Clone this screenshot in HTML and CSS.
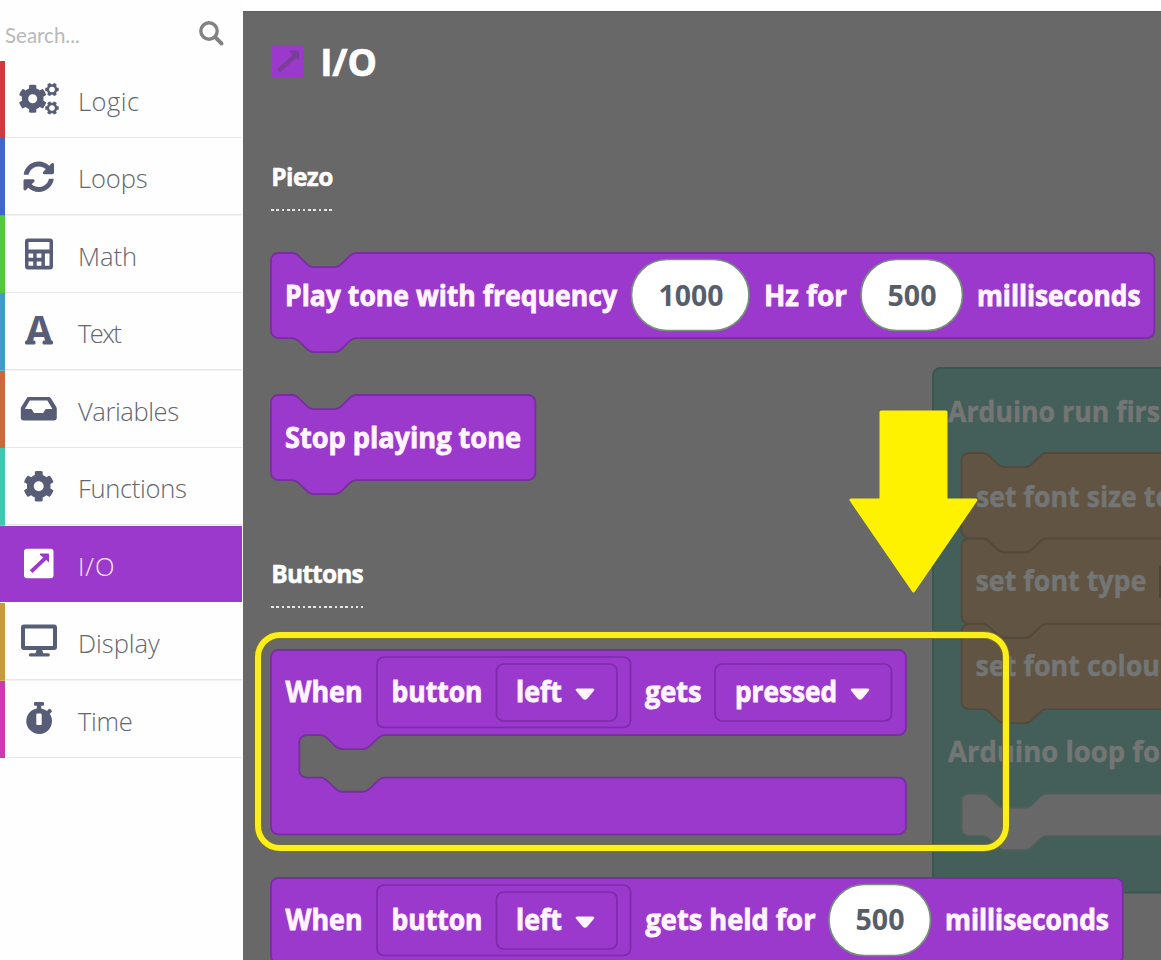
FILE: index.html
```html
<!DOCTYPE html>
<html lang="en">
<head>
<meta charset="utf-8">
<title>Block editor</title>
<link rel="stylesheet" href="styles.css">
</head>
<body>
<svg class="defs" aria-hidden="true">
  <defs>
    <path id="cog" d="M487.4 315.7l-42.6-24.6c4.3-23.2 4.3-47 0-70.2l42.6-24.6c4.9-2.8 7.1-8.6 5.5-14-11.1-35.6-30-67.8-54.7-94.6-3.8-4.1-10-5.1-14.8-2.3L380.8 110c-17.9-15.4-38.5-27.3-60.8-35.1V25.8c0-5.6-3.9-10.5-9.4-11.7-36.7-8.2-74.3-7.8-109.2 0-5.5 1.2-9.4 6.1-9.4 11.7V75c-22.2 7.9-42.8 19.8-60.8 35.1L88.7 85.5c-4.9-2.8-11-1.9-14.8 2.3-24.7 26.7-43.6 58.9-54.7 94.6-1.7 5.4.6 11.2 5.5 14L67.3 221c-4.3 23.2-4.3 47 0 70.2l-42.6 24.6c-4.9 2.8-7.1 8.6-5.5 14 11.1 35.6 30 67.8 54.7 94.6 3.8 4.1 10 5.1 14.8 2.3l42.6-24.6c17.9 15.4 38.5 27.3 60.8 35.1v49.2c0 5.6 3.9 10.5 9.4 11.7 36.7 8.2 74.3 7.8 109.2 0 5.5-1.2 9.4-6.1 9.4-11.7v-49.2c22.2-7.9 42.8-19.8 60.8-35.1l42.6 24.6c4.9 2.8 11 1.9 14.8-2.3 24.7-26.7 43.6-58.9 54.7-94.6 1.5-5.5-.7-11.3-5.6-14.1zM256 336c-44.1 0-80-35.9-80-80s35.9-80 80-80 80 35.9 80 80-35.9 80-80 80z"/>
    <path id="caret" d="M2 0h15q3 0 1.200 2.600l-6.500 7.600q-2.200 2.200-4.400 0L.8 2.600Q-1 0 2 0z"/>
    <path id="set-block" d="M0 4a4 4 0 0 1 4-4h8c2 0 3 1 4 2l4 4c1 1 2 2 4 2h12c2 0 3-1 4-2l4-4c1-1 2-2 4-2H160V48H48c-2 0-3 1-4 2l-4 4c-1 1-2 2-4 2h-12c-2 0-3-1-4-2l-4-4c-1-1-2-2-4-2H4a4 4 0 0 1-4-4z"/>
  </defs>
</svg>
<div class="app">
  <aside class="toolbox">
    <div class="search">
      <span class="search-text">Search...</span>
      <svg class="search-icon" width="26" height="26" viewBox="0 0 26 26"><circle cx="10" cy="10" r="8.200" fill="none" stroke="#828282" stroke-width="3.400"/><path d="M16.200 16.200l6.300 6.300" stroke="#828282" stroke-width="4" stroke-linecap="round"/></svg>
    </div>
    <nav class="categories">
      <div class="category logic">
        <svg class="icon" width="44" height="36" viewBox="0 0 44 36"><use href="#cog" transform="translate(2.200 3.200) scale(.0566)"/><g transform="translate(36 8.500)"><use href="#cog" transform="rotate(30) scale(.0275) translate(-256 -256)"/><circle r="2.800" fill="#fff"/></g><g transform="translate(36 27)"><use href="#cog" transform="rotate(30) scale(.0275) translate(-256 -256)"/><circle r="2.800" fill="#fff"/></g></svg>
        <span class="label">Logic</span>
      </div>
      <div class="category loops">
        <svg class="icon" width="44" height="36" viewBox="0 0 44 36"><path transform="translate(7 3) scale(.0615)" d="M370.720 133.280C339.458 104.008 298.888 87.962 255.848 88c-77.458.068-144.328 53.178-162.791 126.850-1.344 5.363-6.122 9.150-11.651 9.150H24.103c-7.498 0-13.194-6.807-11.807-14.176C33.933 94.924 134.813 8 256 8c66.448 0 126.791 26.136 171.315 68.685L463.030 40.970C478.149 25.851 504 36.559 504 57.941V192c0 13.255-10.745 24-24 24H345.941c-21.382 0-32.090-25.851-16.971-40.971l41.750-41.749zM32 296h134.059c21.382 0 32.090 25.851 16.971 40.971l-41.750 41.750c31.262 29.273 71.835 45.319 114.876 45.280 77.418-.070 144.315-53.144 162.787-126.849 1.344-5.363 6.122-9.150 11.651-9.150h57.304c7.498 0 13.194 6.807 11.807 14.176C478.067 417.076 377.187 504 256 504c-66.448 0-126.791-26.136-171.315-68.685L48.970 471.030C33.851 486.149 8 475.441 8 454.059V320c0-13.255 10.745-24 24-24z"/></svg>
        <span class="label">Loops</span>
      </div>
      <div class="category math">
        <svg class="icon" width="44" height="36" viewBox="0 0 44 36"><path fill-rule="evenodd" d="M12 2.500h22a3 3 0 0 1 3 3v25a3 3 0 0 1-3 3H12a3 3 0 0 1-3-3V5.500a3 3 0 0 1 3-3zM12.500 6v7.500h21V6zM12.500 17.500v4.300h4.700V17.500zm8.200 0v4.300h4.700V17.500zM12.500 25.500v4.300h4.700V25.500zm8.200 0v4.300h4.700V25.500zM28.900 17.500v12.300h4.600V17.500z"/></svg>
        <span class="label">Math</span>
      </div>
      <div class="category text">
        <svg class="icon" width="44" height="36" viewBox="0 0 44 36"><text class="glyph" x="9.500" y="31" textLength="27" lengthAdjust="spacingAndGlyphs">A</text><rect x="9" y="27.500" width="10.500" height="4" rx="1.500"/><rect x="26.500" y="27.500" width="10.500" height="4" rx="1.500"/></svg>
        <span class="label">Text</span>
      </div>
      <div class="category variables">
        <svg class="icon" width="44" height="36" viewBox="0 0 44 36"><path fill-rule="evenodd" d="M12.500 6h20q1.500 0 2.400 1.300l5 7.900q.9 1.300.9 2.800v8.500q0 3-3 3H7.800q-3 0-3-3V18q0-1.500.9-2.800l5-7.900Q11 6 12.500 6zM13.800 9.500l-5 8.500h6.700l2.500 4h9.200l2.500-4h6.700l-5-8.500z"/></svg>
        <span class="label">Variables</span>
      </div>
      <div class="category functions">
        <svg class="icon" width="44" height="36" viewBox="0 0 44 36"><use href="#cog" transform="translate(7 2.500) scale(.0615)"/></svg>
        <span class="label">Functions</span>
      </div>
      <div class="category io selected">
        <svg class="icon" width="44" height="36" viewBox="0 0 44 36"><rect x="8" y="2.800" width="29.500" height="29.500" rx="3"/><path class="hole" d="M24 7.500h8q1 0 1 1v8l-2.800-2.500L16.500 27l-2.700-2.700L27.300 11.500 24 9z"/></svg>
        <span class="label">I/O</span>
      </div>
      <div class="category display">
        <svg class="icon" width="44" height="36" viewBox="0 0 44 36"><path fill-rule="evenodd" d="M8 1.500h30a3 3 0 0 1 3 3v19.500a3 3 0 0 1-3 3H26.200l1 3.300h5q1.600 0 1.600 1.600t-1.600 1.600H14.500q-1.600 0-1.600-1.600t1.600-1.600h5l1-3.300H8a3 3 0 0 1-3-3V4.500a3 3 0 0 1 3-3zM9 5.500v17.500h28V5.500z"/></svg>
        <span class="label">Display</span>
      </div>
      <div class="category time">
        <svg class="icon" width="44" height="36" viewBox="0 0 44 36"><path fill-rule="evenodd" d="M19 1h8q1 0 1 1V3.800q0 1-1 1h-1.800v2.600q3.200.6 5.800 2.500l1.800-1.800q.8-.6 1.500 0l1.300 1.300q.7.700 0 1.500l-1.800 1.900a12.900 12.900 0 1 1-13-5.400V4.800H19q-1 0-1-1V2q0-1 1-1zM21.300 12.500q-1 0-1 1v9.500q0 1 1 1h3.400q1 0 1-1V13.500q0-1-1-1z"/></svg>
        <span class="label">Time</span>
      </div>
    </nav>
  </aside>
  <main class="editor">
    <svg class="workspace" width="229" height="528" viewBox="0 0 229 528">
      <g transform="translate(1 1)">
        <path class="teal" transform="scale(1.772)" d="M0 4a4 4 0 0 1 4-4H160V296H4a4 4 0 0 1-4-4z"/>
        <path class="gap" transform="translate(28.500 425.500) scale(1.772)" d="M4 0h8c2 0 3 1 4 2l4 4c1 1 2 2 4 2h12c2 0 3-1 4-2l4-4c1-1 2-2 4-2H160V24H48c-2 0-3 1-4 2l-4 4c-1 1-2 2-4 2h-12c-2 0-3-1-4-2l-4-4c-1-1-2-2-4-2H4a4 4 0 0 1-4-4V4a4 4 0 0 1 4-4z"/>
        <use class="brown" href="#set-block" transform="translate(28.500 256) scale(1.772)"/>
        <use class="brown" href="#set-block" transform="translate(28.500 170.500) scale(1.772)"/>
        <use class="brown" href="#set-block" transform="translate(28.500 85) scale(1.772)"/>
        <path d="M227 198v32" stroke="#3c3a30" stroke-width="1"/>
        <text x="15" y="53.500" textLength="212" lengthAdjust="spacingAndGlyphs">Arduino run firs</text>
        <text x="43" y="138.500" textLength="196" lengthAdjust="spacingAndGlyphs">set font size to</text>
        <text x="42.500" y="223" textLength="171" lengthAdjust="spacingAndGlyphs">set font type</text>
        <text x="42.500" y="308" textLength="184.500" lengthAdjust="spacingAndGlyphs">set font colou</text>
        <text x="15" y="393.500" textLength="212" lengthAdjust="spacingAndGlyphs">Arduino loop fo</text>
      </g>
    </svg>
    <section class="flyout">
      <header class="flyout-header">
        <svg class="header-icon" width="33" height="33" viewBox="0 0 33 33"><rect width="33" height="33" rx="3" fill="#9a39cb"/><path fill="#793f98" d="M18 5.500h8.500q1.500 0 1.500 1.500v8.500l-3-2.500L9 27.500 6 24.500 21.500 10z"/></svg>
        <h1 class="title">I/O</h1>
      </header>
      <h2 class="group piezo">Piezo</h2>
      <svg class="block play" width="890" height="102" viewBox="-1 -1 890 102">
        <path class="purple" transform="scale(1.772)" d="M0 4a4 4 0 0 1 4-4h8c2 0 3 1 4 2l4 4c1 1 2 2 4 2h12c2 0 3-1 4-2l4-4c1-1 2-2 4-2H494.500a4 4 0 0 1 4 4v40a4 4 0 0 1-4 4H48c-2 0-3 1-4 2l-4 4c-1 1-2 2-4 2h-12c-2 0-3-1-4-2l-4-4c-1-1-2-2-4-2H4a4 4 0 0 1-4-4z"/>
        <text x="14" y="52.500" textLength="332" lengthAdjust="spacingAndGlyphs">Play tone with frequency</text>
        <rect class="field" x="360.500" y="6.500" width="117.500" height="71" rx="35.500"/>
        <text class="value" x="387.500" y="52.500" textLength="65" lengthAdjust="spacingAndGlyphs">1000</text>
        <text x="493" y="52.500" textLength="83" lengthAdjust="spacingAndGlyphs">Hz for</text>
        <rect class="field" x="590" y="6.500" width="101.500" height="71" rx="35.500"/>
        <text class="value" x="616.500" y="52.500" textLength="49" lengthAdjust="spacingAndGlyphs">500</text>
        <text x="706" y="52.500" textLength="163.500" lengthAdjust="spacingAndGlyphs">milliseconds</text>
      </svg>
      <svg class="block stop" width="270" height="102" viewBox="-1 -1 270 102">
        <path class="purple" transform="scale(1.772)" d="M0 4a4 4 0 0 1 4-4h8c2 0 3 1 4 2l4 4c1 1 2 2 4 2h12c2 0 3-1 4-2l4-4c1-1 2-2 4-2H145.200a4 4 0 0 1 4 4v40a4 4 0 0 1-4 4H48c-2 0-3 1-4 2l-4 4c-1 1-2 2-4 2h-12c-2 0-3-1-4-2l-4-4c-1-1-2-2-4-2H4a4 4 0 0 1-4-4z"/>
        <text x="14" y="52.500" textLength="236" lengthAdjust="spacingAndGlyphs">Stop playing tone</text>
      </svg>
      <h2 class="group buttons">Buttons</h2>
      <svg class="block when" width="640" height="187" viewBox="-1 -1 640 187">
        <path class="purple" transform="scale(1.772)" d="M0 4a4 4 0 0 1 4-4H354.300a4 4 0 0 1 4 4v40a4 4 0 0 1-4 4H64c-2 0-3 1-4 2l-4 4c-1 1-2 2-4 2h-12c-2 0-3-1-4-2l-4-4c-1-1-2-2-4-2h-8a4 4 0 0 0-4 4v16a4 4 0 0 0 4 4h8c2 0 3 1 4 2l4 4c1 1 2 2 4 2h12c2 0 3-1 4-2l4-4c1-1 2-2 4-2H354.300a4 4 0 0 1 4 4v24a4 4 0 0 1-4 4H4a4 4 0 0 1-4-4z"/>
        <text x="14.500" y="52" textLength="77" lengthAdjust="spacingAndGlyphs">When</text>
        <rect class="slot" x="106" y="7" width="253.500" height="70.500" rx="7"/>
        <text x="120.500" y="52" textLength="91" lengthAdjust="spacingAndGlyphs">button</text>
        <rect class="slot" x="225.500" y="14" width="120.500" height="57" rx="7"/>
        <text x="245" y="52" textLength="46" lengthAdjust="spacingAndGlyphs">left</text>
        <use class="caret" href="#caret" x="304.500" y="38.500"/>
        <text x="374" y="52" textLength="56.500" lengthAdjust="spacingAndGlyphs">gets</text>
        <rect class="slot" x="444" y="14" width="176.500" height="57" rx="7"/>
        <text x="464" y="52" textLength="102" lengthAdjust="spacingAndGlyphs">pressed</text>
        <use class="caret" href="#caret" x="579.500" y="38.500"/>
      </svg>
      <svg class="block held" width="856" height="84" viewBox="-1 -1 856 84">
        <path class="purple" transform="scale(1.772)" d="M0 4a4 4 0 0 1 4-4H476.700a4 4 0 0 1 4 4v40a4 4 0 0 1-4 4H4a4 4 0 0 1-4-4z"/>
        <text x="14.500" y="52" textLength="77" lengthAdjust="spacingAndGlyphs">When</text>
        <rect class="slot" x="106" y="7" width="253.500" height="70.500" rx="7"/>
        <text x="120.500" y="52" textLength="91" lengthAdjust="spacingAndGlyphs">button</text>
        <rect class="slot" x="225.500" y="14" width="120.500" height="57" rx="7"/>
        <text x="245" y="52" textLength="46" lengthAdjust="spacingAndGlyphs">left</text>
        <use class="caret" href="#caret" x="304.500" y="38.500"/>
        <text x="374.500" y="52" textLength="170" lengthAdjust="spacingAndGlyphs">gets held for</text>
        <rect class="field" x="558" y="6.500" width="101.500" height="71" rx="35.500"/>
        <text class="value" x="584.500" y="52" textLength="49" lengthAdjust="spacingAndGlyphs">500</text>
        <text x="674" y="52" textLength="164" lengthAdjust="spacingAndGlyphs">milliseconds</text>
      </svg>
    </section>
    <div class="highlight"></div>
    <svg class="arrow" width="133" height="186" viewBox="0 0 133 186"><path d="M33 2h65v88h30L65.500 181 3 90h30z"/></svg>
  </main>
</div>
</body>
</html>
```
FILE: styles.css
```css
* { box-sizing: border-box; }

body {
  margin: 0;
  background: #fff;
  font-family: "Open Sans", "Noto Sans", sans-serif;
}

.defs { position: absolute; width: 0; height: 0; }

.app {
  display: flex;
  width: 1161px;
  height: 960px;
  overflow: hidden;
}

.toolbox { width: 243px; background: #fefefe; }

.search {
  display: flex;
  justify-content: space-between;
  align-items: flex-start;
  height: 60.600px;
  padding: 20px 18px 0 5px;
}

.search-text {
  font: 20.500px/30px Lato, sans-serif;
  color: #b9b9b9;
}

.search-icon { margin-top: 1px; }

/* The hue stripe is painted over the divider so neighbouring stripes touch. */
.category {
  display: flex;
  width: 242px;
  height: 77.500px;
  padding: 20px 0 0 16px;
  background:
    linear-gradient(var(--hue), var(--hue)) left / 5px 100% no-repeat,
    linear-gradient(#e6e7e9, #e6e7e9) bottom / 100% 1.500px no-repeat;
}

.category .icon { fill: #575d76; flex: none; overflow: visible; }

.glyph {
  font: bold 42px "Liberation Mono", monospace;
}

.label {
  margin: 2.400px 0 0 18px;
  font-size: 25.500px;
  line-height: 36px;
  font-weight: 300;
  letter-spacing: -.3px;
  color: #62666f;
}

.logic { --hue: #ca3c3e; }
.loops { --hue: #4066c9; }
.math { --hue: #54c83d; }
.text { --hue: #3f9bc8; }
.variables { --hue: #c96a3a; }
.functions { --hue: #3dc9b0; }
.io { --hue: #9a39cb; }
.display { --hue: #c99a3b; }
.time { --hue: #ca3ab0; }

.logic .label { letter-spacing: .5px; }
.loops .label { letter-spacing: -.1px; }
.math .label { letter-spacing: 0; }
.text .label { letter-spacing: -1.600px; }
.variables .label { letter-spacing: -.4px; }
.io .label { letter-spacing: .9px; }
.display .label { letter-spacing: 0; }

.category.selected {
  height: 76px;
  margin-bottom: 1.500px;
  background: #9a39cb;
}

.selected .icon { fill: #fff; }
.selected .hole { fill: #9a39cb; }
.selected .label { color: #ffe9ff; }

.editor {
  position: relative;
  width: 918px;
  height: 949px;
  margin-top: 11px;
  overflow: hidden;
  background: #686868;
  box-shadow: inset 0 1px #5b5f5f;
}

.workspace {
  position: absolute;
  left: 689px;
  top: 356px;
}

.workspace text {
  font: bold 28px "Open Sans", sans-serif;
  fill: #737674;
  stroke: #737674;
  stroke-width: .5;
}

.teal, .gap, .brown { stroke-width: 1; }
.teal { fill: #445f59; stroke: #3b5550; }
.gap { fill: #686868; stroke: #4e5f5b; }
.brown { fill: #615443; stroke: #544a3c; }

.flyout {
  position: relative;
  display: flex;
  flex-direction: column;
  align-items: flex-start;
  padding-left: 27.300px;
}

.flyout > * { flex: none; }

.flyout-header {
  display: flex;
  gap: 16px;
  height: 80px;
  padding: 34px 0 0 1px;
}

.title {
  margin: -8px 0 0;
  font-size: 37px;
  line-height: 50px;
  letter-spacing: -.2px;
  color: #fff;
  -webkit-text-stroke: .7px #fff;
}

.group {
  margin: 70px 0 0 1px;
  height: 50px;
  font-size: 24.500px;
  line-height: 32px;
  letter-spacing: -.6px;
  color: #fff;
  -webkit-text-stroke: .5px #fff;
  background: repeating-linear-gradient(90deg, #e6e6e6 0 2.600px, transparent 2.600px 5.300px) left bottom / 100% 2.500px no-repeat;
}

.piezo { width: 62px; }
.buttons { width: 92px; margin-top: 62.500px; letter-spacing: -.8px; }

.block text {
  font: bold 28px "Open Sans", sans-serif;
  fill: #fff4ff;
  stroke: #fff4ff;
  stroke-width: .8;
}

.block .value { fill: #575e6b; stroke: none; }

.purple { fill: #9a39cb; stroke: #772f9d; stroke-width: 1; }
.slot { fill: none; stroke: #7e2bab; stroke-width: 1.700; }
.field { fill: #fff; stroke: #76917a; stroke-width: 1.700; }
.caret { fill: #fff4ff; }

.play { margin-top: 41px; }
.stop { margin-top: 39.500px; }
.when { margin-top: 41px; }
.held { margin-top: 40.500px; }

.highlight {
  position: absolute;
  left: 12px;
  top: 621px;
  width: 754px;
  height: 219px;
  border: 6px solid #fcee18;
  border-radius: 25px;
  box-shadow: 0 0 0 1px #77712c, inset 0 0 0 1px #77712c;
}

.arrow {
  position: absolute;
  left: 605px;
  top: 398.500px;
}

.arrow path {
  fill: #fff200;
  stroke: #fff200;
  stroke-width: 3;
  stroke-linejoin: round;
}
```
